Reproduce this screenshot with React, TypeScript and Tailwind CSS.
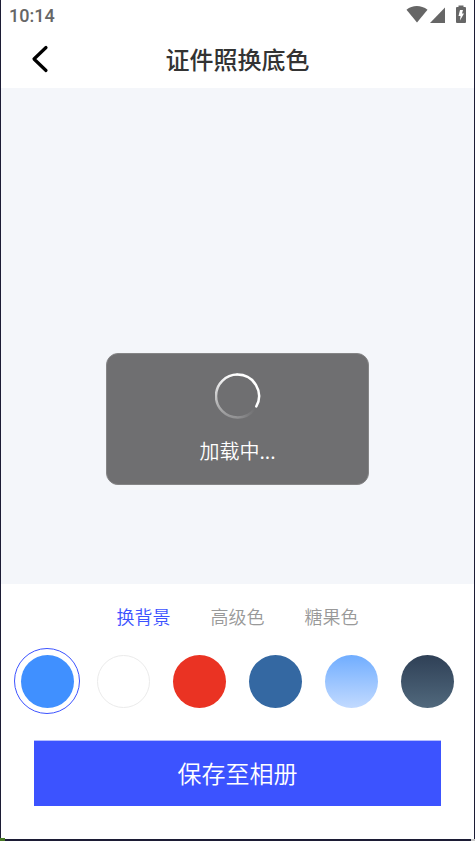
import { useState } from 'react';

const tabs = ['换背景', '高级色', '糖果色'];

const swatches = [
  { name: '蓝色', fill: 'bg-[#4090ff]' },
  { name: '白色', fill: 'bg-white border border-[#ebebeb]' },
  { name: '红色', fill: 'bg-[#ea3323]' },
  { name: '深蓝色', fill: 'bg-[#3468a2]' },
  { name: '浅蓝渐变', fill: 'bg-linear-to-b from-[#70adff] to-[#c2daff]' },
  { name: '深灰渐变', fill: 'bg-linear-to-b from-[#2f4056] to-[#51697d]' },
];

function StatusBar() {
  return (
    <div className="flex h-8 items-center justify-between px-2 text-[#666666]">
      <span className="font-[Roboto,sans-serif] text-lg leading-8 font-medium">10:14</span>
      <div className="flex h-[22px] items-start">
        <svg className="h-5 w-[22px]" viewBox="0 0 22 20" fill="currentColor" aria-hidden="true">
          <path d="M0.5 4.8C6.5 -0.2 15 -0.2 21.5 4.8L11 17.5Z" />
        </svg>
        <svg className="ml-0.5 h-5 w-4" viewBox="0 0 16 20" fill="currentColor" aria-hidden="true">
          <path d="M15 2.5V18H0Z" />
        </svg>
        <svg className="ml-2.5 h-5 w-2.5" viewBox="0 0 10 20" aria-hidden="true">
          <path d="M2.5 0.5H7.5V2H9Q10 2 10 3V17Q10 18 9 18H1Q0 18 0 17V3Q0 2 1 2H2.5Z" fill="currentColor" />
          <path d="M4 5H7L6 8.5H8L4 15.5L4.5 11H2.5Z" fill="white" />
        </svg>
      </div>
    </div>
  );
}

function Spinner() {
  return (
    <svg className="size-[46px]" viewBox="0 0 46 46" fill="none" strokeWidth="2.5" aria-hidden="true">
      <defs>
        <linearGradient id="fade" x1="0" y1="1" x2="0" y2="45" gradientUnits="userSpaceOnUse">
          <stop offset="0" stopColor="white" />
          <stop offset="1" stopColor="white" stopOpacity="0.24" />
        </linearGradient>
        <linearGradient id="tail" x1="23" y1="0" x2="40" y2="0" gradientUnits="userSpaceOnUse">
          <stop offset="0" stopColor="white" stopOpacity="0.24" />
          <stop offset="1" stopColor="white" stopOpacity="0" />
        </linearGradient>
      </defs>
      <path d="M22.5 44.5A21.5 21.5 0 0 1 22.5 1.5" stroke="url(#fade)" />
      <path d="M39.5 36.2A21.5 21.5 0 0 1 22.5 44.5" stroke="url(#tail)" />
      <path d="M22.5 1.5A21.5 21.5 0 0 1 41.3 33.4" stroke="white" strokeLinecap="round" />
    </svg>
  );
}

export default function App() {
  const [tab, setTab] = useState(0);
  const [color, setColor] = useState(0);

  return (
    <div className="relative flex min-h-screen flex-col border-x border-b-2 border-[#1c1c35] bg-white font-['Noto_Sans_CJK_SC',sans-serif] font-[350]">
      <StatusBar />
      <header className="grid h-14 grid-cols-[80px_1fr_80px] items-center pb-0.5">
        <button type="button" aria-label="返回" className="flex h-[54px] items-center pl-[30px]">
          <svg className="h-7 w-[18px]" viewBox="0 0 18 28" fill="none" stroke="black" strokeWidth="3.2" strokeLinecap="round" strokeLinejoin="round" aria-hidden="true">
            <path d="M15 2.5L3 14L15 25.5" />
          </svg>
        </button>
        <h1 className="text-center text-2xl leading-8 font-medium text-[#333333]">证件照换底色</h1>
      </header>

      <main className="flex flex-1 flex-col items-center bg-[#f4f6fa] pt-[265px]">
        <div role="status" className="flex h-[132px] w-[263px] flex-col items-center rounded-xl border border-[#858586] bg-[#6f6f71] pt-[19px] text-white">
          <Spinner />
          <p className="mt-4 text-xl leading-8">加载中...</p>
        </div>
      </main>

      <section className="pt-4 pb-[33px]">
        <div role="tablist" className="flex justify-center gap-10">
          {tabs.map((label, i) => (
            <button
              key={label}
              type="button"
              role="tab"
              aria-selected={tab === i}
              onClick={() => setTab(i)}
              className={`text-lg leading-8 ${tab === i ? 'text-[#3c53ff]' : 'text-[#999999]'}`}
            >
              {label}
            </button>
          ))}
        </div>
        <div className="mt-4 flex justify-between px-[13px]">
          {swatches.map((s, i) => (
            <button
              key={s.name}
              type="button"
              aria-label={s.name}
              aria-pressed={color === i}
              onClick={() => setColor(i)}
              className={`flex size-[66px] items-center justify-center rounded-full border ${color === i ? 'border-[#3c53ff]' : 'border-transparent'}`}
            >
              <span className={`size-[53px] rounded-full ${s.fill}`} />
            </button>
          ))}
        </div>
        <div className="mt-[26px] px-[33px]">
          <button type="button" className="h-[66px] w-full border-t border-[#b4bdff] bg-[#3c53ff] pb-0.5 text-2xl text-white">
            保存至相册
          </button>
        </div>
      </section>
      <span className="absolute -bottom-0.5 -left-px h-[3px] w-[5px] bg-[#4a7a28]" aria-hidden="true" />
      <span className="absolute -right-px -bottom-0.5 h-0.5 w-1 bg-[#c9c9c9]" aria-hidden="true" />
    </div>
  );
}
